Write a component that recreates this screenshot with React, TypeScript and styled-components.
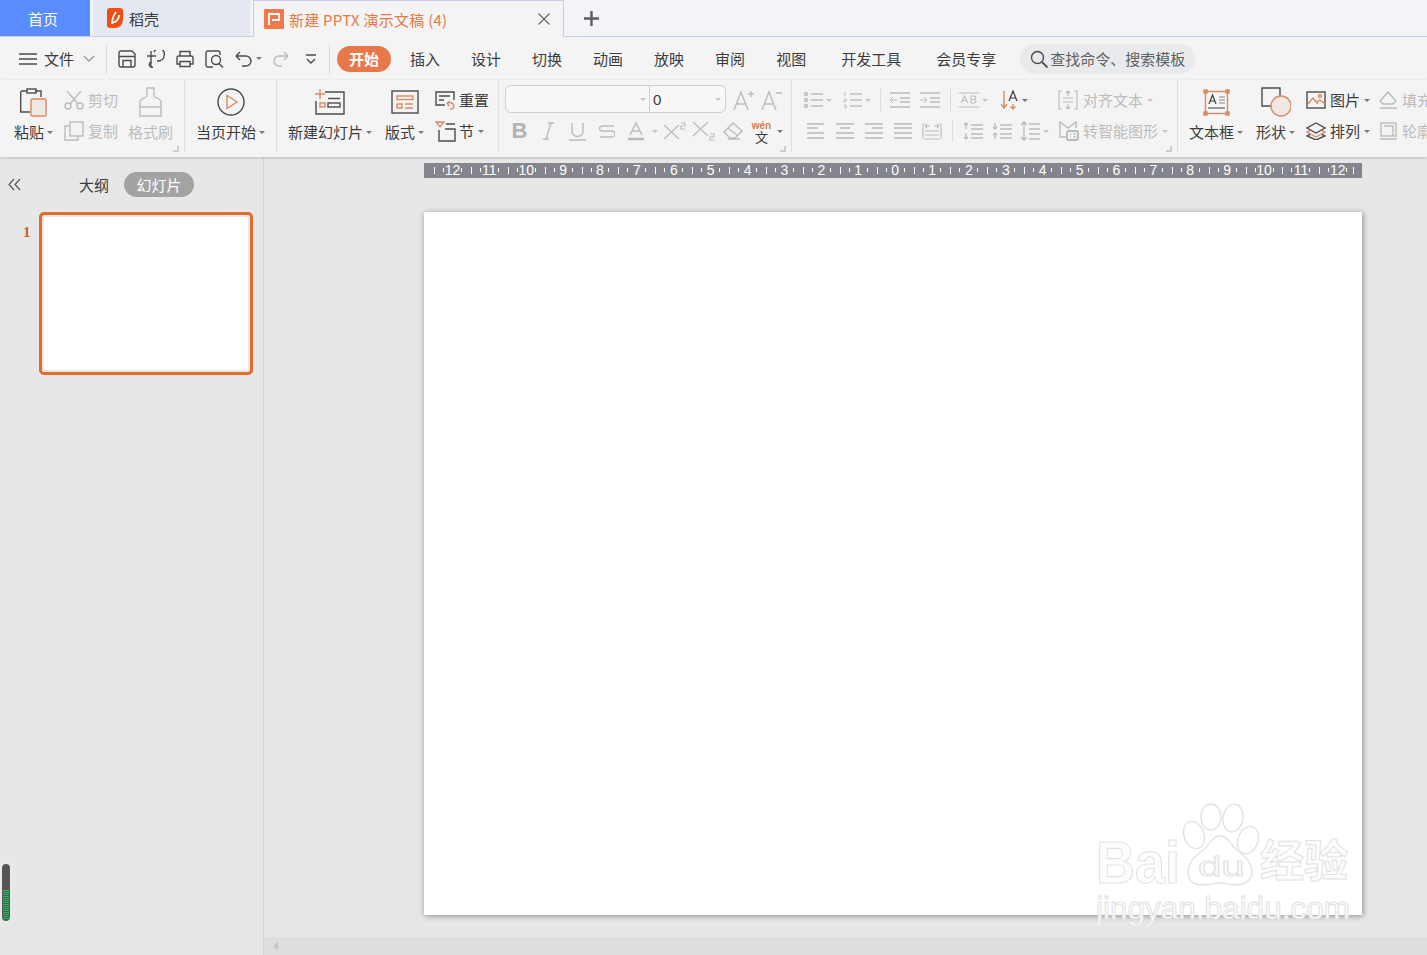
import React from "react";
import styled, { createGlobalStyle } from "styled-components";

const GlobalStyle = createGlobalStyle`
  html, body {
    margin: 0;
    padding: 0;
    background: #e7e7e7;
  }
  * {
    box-sizing: border-box;
  }
`;

const tones = {
  dark: "#4c4c4c",
  gray: "#bcbcbc",
  orange: "#d98b62",
};
type Tone = keyof typeof tones;

const Svg = styled.svg<{ $tone: Tone; $ml?: number }>`
  flex: none;
  display: block;
  fill: none;
  stroke: ${(p) => tones[p.$tone]};
  stroke-width: 1.4;
  margin-left: ${(p) => p.$ml || 0}px;
`;

const Ic = ({
  w,
  h,
  tone = "dark",
  ml,
  children,
}: {
  w: number;
  h: number;
  tone?: Tone;
  ml?: number;
  children: React.ReactNode;
}) => (
  <Svg width={w} height={h} viewBox={`0 0 ${w} ${h}`} $tone={tone} $ml={ml}>
    {children}
  </Svg>
);

const Page = styled.div`
  display: flex;
  flex-direction: column;
  width: 1427px;
  height: 955px;
  overflow: hidden;
  font-family: "Noto Sans CJK SC", "Liberation Sans", sans-serif;
  font-size: 15px;
  color: #3c3c3c;
  background: #e7e7e7;
`;

/* title tabs */
const TabBar = styled.div`
  display: flex;
  flex: none;
  height: 37px;
  background: #f2f4f8;
  border-bottom: 1px solid #c6cfe1;
`;

const HomeTab = styled.div`
  display: flex;
  align-items: center;
  justify-content: center;
  width: 90px;
  padding: 1px 4px 0 0;
  background: #5b8cff;
  color: #fff;
`;

const ShellTab = styled.div`
  display: flex;
  align-items: center;
  gap: 6px;
  width: 157px;
  margin-left: 3px;
  padding-left: 14px;
  background: #e4e8f0;
`;

const DocTab = styled.div`
  display: flex;
  align-items: center;
  gap: 5px;
  width: 311px;
  height: 37px;
  margin-left: 3px;
  padding: 0 13px 0 10px;
  background: #f4f4f4;
  border: 1px solid #c6cfe1;
  border-bottom: none;
  color: #e7784a;
`;

const DocTitle = styled.span`
  flex: 1;
  letter-spacing: 0.25px;
  white-space: nowrap;
`;

const AddTab = styled.div`
  display: flex;
  align-items: center;
  margin-left: 20px;
`;

/* menu row */
const MenuRow = styled.div`
  display: flex;
  align-items: center;
  flex: none;
  height: 43px;
  padding-left: 19px;
  background: #f4f4f4;
`;

const FileMenu = styled.span`
  margin-left: 7px;
`;

const QuickSep = styled.div<{ $ml: number }>`
  flex: none;
  width: 1px;
  height: 30px;
  margin-left: ${(p) => p.$ml}px;
  background: #dcdcdc;
`;

const MenuTab = styled.div<{ $gap: number; $active?: boolean }>`
  flex: none;
  margin-left: ${(p) => p.$gap}px;
  padding: ${(p) => (p.$active ? "0 12px" : "0")};
  line-height: 26px;
  border-radius: 13px;
  background: ${(p) => (p.$active ? "#e7784a" : "transparent")};
  color: ${(p) => (p.$active ? "#fff" : "#3c3c3c")};
  font-weight: ${(p) => (p.$active ? 700 : 400)};
`;

const SearchBox = styled.div`
  display: flex;
  align-items: center;
  gap: 2px;
  width: 175px;
  height: 30px;
  margin-left: 24px;
  padding-left: 10px;
  border-radius: 15px;
  background: #e9eaec;
  color: #5f5f5f;
  white-space: nowrap;
`;

/* ribbon */
const Ribbon = styled.div`
  position: relative;
  z-index: 1;
  display: flex;
  flex: none;
  height: 77px;
  background: #f4f4f4;
  box-shadow: 0 1px 3px rgba(0, 0, 0, 0.18);
`;

const Group = styled.div<{ $w?: number; $pl?: number }>`
  position: relative;
  display: flex;
  flex: ${(p) => (p.$w ? "none" : "1")};
  width: ${(p) => (p.$w ? `${p.$w}px` : "auto")};
  height: 72px;
  padding: 5px 0 0 ${(p) => p.$pl || 0}px;
  border-right: ${(p) => (p.$w ? "1px solid #e0e0e0" : "none")};
  white-space: nowrap;
`;

const Launcher = styled.div`
  position: absolute;
  right: 5px;
  bottom: 0;
  width: 6px;
  height: 6px;
  border-right: 2px solid #cdcdcd;
  border-bottom: 2px solid #cdcdcd;
`;

const LargeButton = styled.div<{ $w: number; $ml?: number; $muted?: boolean }>`
  display: grid;
  grid-template-rows: 34px 26px;
  justify-items: center;
  align-items: center;
  flex: none;
  width: ${(p) => p.$w}px;
  margin-left: ${(p) => p.$ml || 0}px;
  color: ${(p) => (p.$muted ? "#bcbcbc" : "#3c3c3c")};
`;

const LargeLabel = styled.div`
  display: flex;
  align-items: center;
  justify-content: center;
  line-height: 26px;
`;

const Stack = styled.div<{ $ml?: number }>`
  display: flex;
  flex-direction: column;
  gap: 1px;
  flex: none;
  margin-left: ${(p) => p.$ml || 0}px;
`;

const Row = styled.div<{ $ml?: number }>`
  display: flex;
  align-items: center;
  height: 30px;
  margin-left: ${(p) => p.$ml || 0}px;
`;

const Label = styled.span<{ $muted?: boolean; $ml?: number }>`
  margin: 0 0 2px ${(p) => p.$ml ?? 4}px;
  color: ${(p) => (p.$muted ? "#bcbcbc" : "#3c3c3c")};
`;

const Caret = styled.i<{ $ml?: number; $muted?: boolean }>`
  flex: none;
  width: 0;
  height: 0;
  margin-left: ${(p) => p.$ml ?? 3}px;
  border-left: 3px solid transparent;
  border-right: 3px solid transparent;
  border-top: 3px solid ${(p) => (p.$muted ? "#c4c4c4" : "#7a7a7a")};
`;

const RowSep = styled.div<{ $ml: number }>`
  flex: none;
  width: 1px;
  height: 22px;
  margin-left: ${(p) => p.$ml}px;
  background: #dcdcdc;
`;

const FontBox = styled.div`
  display: flex;
  width: 221px;
  height: 28px;
  margin-bottom: 2px;
  border: 1px solid #cfcfcf;
  border-radius: 6px;
  background: #f8f8f8;
`;

const FontName = styled.div`
  display: flex;
  align-items: center;
  justify-content: flex-end;
  width: 144px;
  padding-right: 3px;
  border-right: 1px solid #cfcfcf;
`;

const FontSize = styled.div`
  display: flex;
  align-items: center;
  justify-content: space-between;
  flex: 1;
  padding: 0 4px 0 3px;
  font-family: "Liberation Sans", sans-serif;
  font-size: 15px;
`;

const ToolCell = styled.div<{ $w?: number; $ml?: number }>`
  display: flex;
  align-items: center;
  justify-content: center;
  flex: none;
  width: ${(p) => p.$w || 29}px;
  margin-left: ${(p) => p.$ml || 0}px;
`;

const BoldMark = styled.b`
  font-family: "Liberation Sans", sans-serif;
  font-size: 22px;
  color: #b4b4b4;
`;

const WenMark = styled.div`
  display: flex;
  flex-direction: column;
  align-items: center;
  font-family: "Liberation Sans", sans-serif;
  font-size: 10px;
  font-weight: 700;
  line-height: 11px;
  color: #d07f50;
`;

const WenChar = styled.span`
  font-family: "Noto Sans CJK SC", sans-serif;
  font-size: 13px;
  font-weight: 400;
  line-height: 12px;
  color: #3c3c3c;
`;

/* workspace */
const Workspace = styled.div`
  display: flex;
  flex: 1;
  min-height: 0;
`;

const Sidebar = styled.aside`
  display: flex;
  flex-direction: column;
  flex: none;
  width: 264px;
  padding-top: 15px;
  border-right: 1px solid #d6d6d6;
`;

const SideHeader = styled.div`
  display: flex;
  align-items: center;
  height: 25px;
  padding-left: 8px;
`;

const OutlineTab = styled.span`
  margin-left: 58px;
  color: #3c3c3c;
`;

const SlidesTab = styled.span`
  width: 70px;
  margin-left: 15px;
  line-height: 25px;
  text-align: center;
  border-radius: 13px;
  background: #a3a3a3;
  color: #fff;
`;

const ThumbRow = styled.div`
  display: flex;
  margin-top: 15px;
  padding-left: 23px;
`;

const ThumbNumber = styled.span`
  width: 16px;
  padding-top: 10px;
  font-family: "Liberation Serif", serif;
  font-size: 15px;
  font-weight: 700;
  line-height: 20px;
  color: #d2601a;
`;

const Thumb = styled.div`
  width: 214px;
  height: 163px;
  padding: 2px;
  border: 3px solid #e06c2e;
  border-radius: 5px;
  background: #e7e7e7;
`;

const ThumbPaper = styled.div`
  height: 100%;
  background: #fff;
`;

const LevelMeter = styled.div`
  display: flex;
  flex-direction: column;
  justify-content: flex-end;
  gap: 1px;
  width: 8px;
  height: 57px;
  margin: auto 0 34px 2px;
  padding: 0 1px 2px;
  border-radius: 4px;
  background: #555;
  box-shadow: 0 0 2px #fff;
`;

const LevelTick = styled.div`
  flex: none;
  height: 1px;
  background: #17c653;
`;

const Main = styled.main`
  display: flex;
  flex-direction: column;
  flex: 1;
  min-width: 0;
  padding-top: 6px;
`;

const Ruler = styled.div`
  display: flex;
  flex: none;
  width: 938px;
  height: 15px;
  margin-left: 160px;
  padding-left: 10px;
  background: #85868d;
`;

const RulerCell = styled.div`
  width: 36.9px;
  font-family: "Liberation Sans", sans-serif;
  font-size: 14px;
  line-height: 15px;
  text-align: center;
  color: #fff;
  background-image: linear-gradient(#fff, #fff), linear-gradient(#fff, #fff), linear-gradient(#fff, #fff);
  background-repeat: no-repeat;
  background-size: 1px 7px, 1px 4px, 1px 4px;
  background-position: 0 4px, 25% 5px, 75% 5px;
`;

const RulerEnd = styled.div`
  width: 1px;
  height: 7px;
  margin: 4px 0 0 -3px;
  background: #fff;
`;

const Stage = styled.div`
  flex: 1;
  padding: 34px 0 0 160px;
`;

const Slide = styled.div`
  position: relative;
  width: 938px;
  height: 703px;
  background: #fff;
  box-shadow: 1px 1px 6px rgba(0, 0, 0, 0.4);
`;

const Watermark = styled.div`
  position: absolute;
  top: 591px;
  right: 10px;
  width: 256px;
  height: 125px;
  color: #fdfdfd;
  -webkit-text-stroke: 1px #e2e2e2;
  font-family: "Liberation Sans", sans-serif;
  font-weight: 700;
  line-height: 1;
`;

const WmPaw = styled.svg`
  position: absolute;
  top: 0;
  left: 84px;
  fill: #fff;
  stroke: #e2e2e2;
  stroke-width: 1.4;
`;

const WmBai = styled.span`
  position: absolute;
  top: 29px;
  left: 0;
  font-size: 54px;
  transform: scaleY(1.1);
  transform-origin: top left;
`;

const WmDu = styled.span`
  position: absolute;
  top: 50px;
  left: 102px;
  font-size: 28px;
  font-weight: 400;
  transform: scaleX(1.5);
  transform-origin: top left;
`;

const WmCn = styled.span`
  position: absolute;
  top: 33px;
  left: 164px;
  font-family: "Noto Sans CJK SC", sans-serif;
  font-size: 44px;
`;

const WmUrl = styled.span`
  position: absolute;
  top: 90px;
  left: 0;
  font-size: 31.5px;
  font-weight: 400;
`;

const ScrollBar = styled.div`
  display: flex;
  align-items: center;
  flex: none;
  height: 18px;
  padding-left: 9px;
  background: #dedede;
`;

const ScrollArrow = styled.i`
  width: 0;
  height: 0;
  border-top: 4px solid transparent;
  border-bottom: 4px solid transparent;
  border-right: 5px solid #c4c4c4;
`;

const LinesIcon = ({ tone = "gray" as Tone, rows }: { tone?: Tone; rows: [number, number, number][] }) => (
  <Ic w={18} h={18} tone={tone}>
    {rows.map(([x1, x2, y]) => (
      <path key={y} d={`M${x1} ${y}H${x2}`} strokeWidth="1.6" />
    ))}
  </Ic>
);

const tabs: { label: string; gap: number; active?: boolean }[] = [
  { label: "开始", gap: 7, active: true },
  { label: "插入", gap: 19 },
  { label: "设计", gap: 31 },
  { label: "切换", gap: 31 },
  { label: "动画", gap: 31 },
  { label: "放映", gap: 31 },
  { label: "审阅", gap: 31 },
  { label: "视图", gap: 31 },
  { label: "开发工具", gap: 35 },
  { label: "会员专享", gap: 35 },
];

const rulerLabels = [12, 11, 10, 9, 8, 7, 6, 5, 4, 3, 2, 1, 0, 1, 2, 3, 4, 5, 6, 7, 8, 9, 10, 11, 12];

const App = () => {
  return (
    <Page>
      <GlobalStyle />
      <TabBar>
        <HomeTab>首页</HomeTab>
        <ShellTab>
          <Ic w={16} h={20} tone="orange">
            <path d="M3 0H13A3 3 0 0 1 16 3V12A8 8 0 0 1 8 20H3A3 3 0 0 1 0 17V3A3 3 0 0 1 3 0Z" fill="#f04e12" stroke="none" />
            <path d="M9 4C6 8 5 12 5 16M5 15C9 14 12 11 12 7" stroke="#fff" strokeWidth="1.8" />
          </Ic>
          稻壳
        </ShellTab>
        <DocTab>
          <Ic w={20} h={20} tone="orange">
            <rect width="20" height="20" rx="1" fill="#f07a4d" stroke="none" />
            <path d="M5 16V5H15V11H8" stroke="#fff" strokeWidth="1.8" />
          </Ic>
          <DocTitle>新建 PPTX 演示文稿 (4)</DocTitle>
          <Ic w={12} h={12}>
            <path d="M.5 .5L11.5 11.5M11.5 .5L.5 11.5" stroke="#666" strokeWidth="1.2" />
          </Ic>
        </DocTab>
        <AddTab>
          <Ic w={15} h={15}>
            <path d="M7.5 0V15M0 7.5H15" stroke="#5c5c5c" strokeWidth="2.4" />
          </Ic>
        </AddTab>
      </TabBar>

      <MenuRow>
        <Ic w={18} h={12}>
          <path d="M0 1H18M0 6H18M0 11H18" />
        </Ic>
        <FileMenu>文件</FileMenu>
        <Ic w={12} h={7} tone="gray" ml={9}>
          <path d="M1 1L6 6L11 1" stroke="#9a9a9a" />
        </Ic>
        <QuickSep $ml={11} />
        <Ic w={18} h={18} ml={11}>
          <path d="M3 1H14L17 4V15A2 2 0 0 1 15 17H3A2 2 0 0 1 1 15V3A2 2 0 0 1 3 1ZM1 6.5H17M5 17V10.5H13V17" />
        </Ic>
        <Ic w={18} h={18} ml={11}>
          <path d="M0 6H9M4 1V17M6 17A2.5 2.5 0 0 1 4 12M7 2A5 5 0 0 1 17 6C17 9 14 11 10 11" />
        </Ic>
        <Ic w={18} h={18} ml={11}>
          <path d="M4 6V1.5H14V6M4 14H1V8A2 2 0 0 1 3 6H15A2 2 0 0 1 17 8V14H14M4 11.5H14V16.5H4Z" />
        </Ic>
        <Ic w={19} h={18} ml={11}>
          <path d="M8 17H3A2 2 0 0 1 1 15V3A2 2 0 0 1 3 1H13A2 2 0 0 1 15 3V5" />
          <circle cx="11" cy="10" r="4.5" />
          <path d="M14 13.5L18 17.5" />
        </Ic>
        <Ic w={18} h={16} ml={11}>
          <path d="M1 5H11A5 5 0 0 1 11 15H7M1 5L5 1M1 5L5 9" />
        </Ic>
        <Caret $ml={3} />
        <Ic w={16} h={16} tone="gray" ml={11}>
          <path d="M15 5H6A5 5 0 0 0 6 15H9M15 5L11 1M15 5L11 9" />
        </Ic>
        <Ic w={12} h={10} ml={16}>
          <path d="M1 1H11M2 5L6 9L10 5" />
        </Ic>
        <QuickSep $ml={12} />
        {tabs.map((t) => (
          <MenuTab key={t.label} $gap={t.gap} $active={t.active}>
            {t.label}
          </MenuTab>
        ))}
        <SearchBox>
          <Ic w={18} h={18}>
            <circle cx="7.5" cy="7.5" r="6" />
            <path d="M12 12L17.5 17.5" strokeWidth="1.8" />
          </Ic>
          查找命令、搜索模板
        </SearchBox>
      </MenuRow>

      <Ribbon>
        <Group $w={185} $pl={14}>
          <LargeButton $w={39}>
            <Ic w={27} h={29}>
              <path d="M7 3H2A1.5 1.5 0 0 0 .7 4.5V24H10M15 3H21V9" />
              <rect x="7" y="1" width="9" height="4" />
              <rect x="11" y="11" width="15" height="17" rx="1" fill="#f0e8e2" stroke="#d98b62" />
            </Ic>
            <LargeLabel>
              粘贴
              <Caret />
            </LargeLabel>
          </LargeButton>
          <Stack $ml={11}>
            <Row>
              <Ic w={20} h={20} tone="gray">
                <circle cx="4" cy="16" r="3" />
                <circle cx="16" cy="16" r="3" />
                <path d="M6 14L17 1M14 14L3 1" />
              </Ic>
              <Label $muted>剪切</Label>
            </Row>
            <Row>
              <Ic w={20} h={20} tone="gray">
                <rect x="6" y="1" width="13" height="14" />
                <path d="M6 5H1V19H14V15" />
              </Ic>
              <Label $muted>复制</Label>
            </Row>
          </Stack>
          <LargeButton $w={45} $ml={10} $muted>
            <Ic w={23} h={30} tone="gray">
              <path d="M8 1H15V9C15 11 22 11 22 15V29H1V15C1 11 8 11 8 9ZM1 20H22" />
            </Ic>
            <LargeLabel>格式刷</LargeLabel>
          </LargeButton>
          <Launcher />
        </Group>

        <Group $w={92} $pl={11}>
          <LargeButton $w={69}>
            <Ic w={28} h={28}>
              <circle cx="14" cy="14" r="13" />
              <path d="M10 7.5L20 14L10 20.5Z" stroke="#d98b62" />
            </Ic>
            <LargeLabel>
              当页开始
              <Caret />
            </LargeLabel>
          </LargeButton>
        </Group>

        <Group $w={222} $pl={11}>
          <LargeButton $w={84}>
            <Ic w={30} h={26}>
              <path d="M10 3H29V25H1V12" />
              <path d="M0 5H10M5 0V10" stroke="#d98b62" />
              <rect x="5" y="14" width="5" height="4" stroke="#d98b62" />
              <path d="M13 9.5H25" />
              <rect x="13" y="14" width="12" height="4" />
            </Ic>
            <LargeLabel>
              新建幻灯片
              <Caret />
            </LargeLabel>
          </LargeButton>
          <LargeButton $w={39} $ml={13}>
            <Ic w={28} h={24}>
              <rect x="1" y="1" width="26" height="22" />
              <rect x="6" y="6" width="16" height="3.5" stroke="#d98b62" />
              <rect x="6" y="14" width="5" height="4" stroke="#d98b62" />
              <path d="M14 14H22M14 18H22" stroke="#d98b62" />
            </Ic>
            <LargeLabel>
              版式
              <Caret />
            </LargeLabel>
          </LargeButton>
          <Stack $ml={11}>
            <Row>
              <Ic w={21} h={19}>
                <path d="M10 14H1V1H19V9M4 5H15M4 9H9" />
                <path d="M12 12L14 15M12 12L15 10M12.5 12C15 11 19 12 19 15C19 17 17 18 15 18" stroke="#d98b62" />
              </Ic>
              <Label $ml={3}>重置</Label>
            </Row>
            <Row>
              <Ic w={21} h={21}>
                <path d="M1 1H9L5 6Z" stroke="#d98b62" />
                <path d="M11 3H20M4 9V20H20V8H10" />
              </Ic>
              <Label $ml={3}>节</Label>
              <Caret $ml={4} />
            </Row>
          </Stack>
        </Group>

        <Group $w={293} $pl={6}>
          <Stack>
            <Row>
              <FontBox>
                <FontName>
                  <Caret $muted />
                </FontName>
                <FontSize>
                  0
                  <Caret $muted />
                </FontSize>
              </FontBox>
              <Ic w={21} h={22} tone="gray" ml={7}>
                <path d="M1 21L8 3L15 21M4 15H12M15 5H21M18 2V8" />
              </Ic>
              <Ic w={21} h={22} tone="gray" ml={7}>
                <path d="M1 21L8 3L15 21M4 15H12M15 4H21" />
              </Ic>
            </Row>
            <Row>
              <ToolCell><BoldMark>B</BoldMark></ToolCell>
              <ToolCell>
                <Ic w={11} h={18} tone="gray">
                  <path d="M3 17L8 1M5 1H11M0 17H6" />
                </Ic>
              </ToolCell>
              <ToolCell>
                <Ic w={17} h={19} tone="gray">
                  <path d="M3 1V9A5.5 5.5 0 0 0 14 9V1M0 18H17" />
                </Ic>
              </ToolCell>
              <ToolCell>
                <Ic w={16} h={15} tone="gray">
                  <path d="M15 2H3A2.5 2.5 0 0 0 3 7H13A2.7 2.7 0 0 1 13 13H1" />
                </Ic>
              </ToolCell>
              <ToolCell>
                <Ic w={16} h={19} tone="gray">
                  <path d="M2 13L8 1L14 13M4 9H12" />
                  <path d="M0 17H16" strokeWidth="2.5" />
                </Ic>
              </ToolCell>
              <ToolCell $w={10}><Caret $ml={0} $muted /></ToolCell>
              <ToolCell>
                <Ic w={23} h={18} tone="gray">
                  <path d="M1 3L16 17M16 3L1 17M18 1H22V4H18V7H22" strokeWidth="1.2" />
                </Ic>
              </ToolCell>
              <ToolCell>
                <Ic w={23} h={20} tone="gray">
                  <path d="M1 1L16 15M16 1L1 15M18 13H22V16H18V19H22" strokeWidth="1.2" />
                </Ic>
              </ToolCell>
              <ToolCell>
                <Ic w={20} h={18} tone="gray">
                  <path d="M1 10L10 1L19 9L12 16H7ZM5 6L14 13M5 17H17" />
                </Ic>
              </ToolCell>
              <ToolCell>
                <WenMark>
                  wén
                  <WenChar>文</WenChar>
                </WenMark>
              </ToolCell>
              <Caret $ml={1} />
            </Row>
          </Stack>
          <Launcher />
        </Group>

        <Group $w={386} $pl={11}>
          <Stack>
            <Row>
              <ToolCell $w={22}>
                <Ic w={20} h={18} tone="gray">
                  <circle cx="2" cy="3" r="1.5" />
                  <circle cx="2" cy="9" r="1.5" />
                  <circle cx="2" cy="15" r="1.5" />
                  <path d="M7 3H19M7 9H19M7 15H19" strokeWidth="1.6" />
                </Ic>
              </ToolCell>
              <Caret $muted $ml={1} />
              <ToolCell $w={22} $ml={10}>
                <Ic w={20} h={18} tone="gray">
                  <path d="M2 1V5M1 8H3V10H1V12M1 14H3V17H1" strokeWidth="1" />
                  <path d="M7 3H19M7 9H19M7 15H19" strokeWidth="1.6" />
                </Ic>
              </ToolCell>
              <Caret $muted $ml={1} />
              <RowSep $ml={9} />
              <ToolCell $w={22} $ml={8}>
                <Ic w={22} h={18} tone="gray">
                  <path d="M1 2H21M11 7H21M11 11H21M1 16H21" strokeWidth="1.5" />
                  <path d="M8 9H1M4 6L1 9L4 12" strokeWidth="1" />
                </Ic>
              </ToolCell>
              <ToolCell $w={22} $ml={8}>
                <Ic w={22} h={18} tone="gray">
                  <path d="M1 2H21M11 7H21M11 11H21M1 16H21" strokeWidth="1.5" />
                  <path d="M1 9H8M5 6L8 9L5 12" strokeWidth="1" />
                </Ic>
              </ToolCell>
              <RowSep $ml={9} />
              <ToolCell $w={20} $ml={8}>
                <Ic w={20} h={16} tone="gray">
                  <path d="M0 1H20M0 15H20M2 11L5.5 4L9 11M3.5 8.5H7.5M12 4V11H15.5A1.8 1.8 0 0 0 15.5 7.5H12M12 7.5H15A1.7 1.7 0 0 0 15 4H12" strokeWidth="1.1" />
                </Ic>
              </ToolCell>
              <Caret $muted $ml={3} />
              <ToolCell $w={20} $ml={12}>
                <Ic w={18} h={20} tone="orange">
                  <path d="M3 1V18M0 14L3 18L6 14M12 14V19M9.5 16.5L12 19L14.5 16.5" />
                  <path d="M8 11L12 1L16 11M9.5 8H14.5" stroke="#3c3c3c" strokeWidth="1.2" />
                </Ic>
              </ToolCell>
              <Caret $ml={2} />
              <Ic w={20} h={20} tone="gray" ml={30}>
                <path d="M4 1H1V19H4M16 1H19V19H16M5 8H15M5 12H15M10 1V6M8 3L10 1L12 3M10 14V19M8 17L10 19L12 17" strokeWidth="1.2" />
              </Ic>
              <Label $muted $ml={5}>对齐文本</Label>
              <Caret $muted $ml={4} />
            </Row>
            <Row $ml={4}>
              <LinesIcon rows={[[0, 17, 2], [0, 11, 6], [0, 17, 11], [0, 17, 16]]} />
              <ToolCell $w={18} $ml={11}>
                <LinesIcon rows={[[0, 18, 2], [4, 14, 6], [0, 18, 11], [0, 18, 16]]} />
              </ToolCell>
              <ToolCell $w={18} $ml={11}>
                <LinesIcon rows={[[0, 18, 2], [7, 18, 6], [0, 18, 11], [0, 18, 16]]} />
              </ToolCell>
              <ToolCell $w={18} $ml={11}>
                <LinesIcon rows={[[0, 18, 2], [0, 18, 6], [0, 18, 11], [0, 18, 16]]} />
              </ToolCell>
              <Ic w={20} h={18} tone="gray" ml={10}>
                <path d="M1 1V17M19 1V17M3 9H17M3 13H17M3 17H17M3 4H8M3 4L5 2M3 4L5 6M12 4H17M17 4L15 2M17 4L15 6" strokeWidth="1.1" />
              </Ic>
              <RowSep $ml={10} />
              <Ic w={20} h={18} tone="gray" ml={10}>
                <path d="M8 3H20M8 7H20M8 12H20M8 16H20M3 1V7M1 3L3 1L5 3M3 11V17M1 15L3 17L5 15" strokeWidth="1.3" />
              </Ic>
              <Ic w={20} h={18} tone="gray" ml={9}>
                <path d="M8 3H20M8 7H20M8 12H20M8 16H20M3 1V7M1 5L3 7L5 5M3 11V17M1 13L3 11L5 13" strokeWidth="1.3" />
              </Ic>
              <Ic w={20} h={20} tone="gray" ml={8}>
                <path d="M9 3H20M9 8H20M9 13H20M9 18H20M4 1V19M1 4L4 1L7 4M1 16L4 19L7 16" strokeWidth="1.3" />
              </Ic>
              <Caret $muted $ml={3} />
              <Ic w={20} h={20} tone="gray" ml={10}>
                <path d="M7 16H1V1L9 7L17 1V7" />
                <rect x="8" y="10" width="11" height="9" rx="1.5" stroke="#a8a8a8" />
                <path d="M11 13H12M14 13H17M11 16H12M14 16H17" stroke="#a8a8a8" strokeWidth="1" />
              </Ic>
              <Label $muted $ml={4}>转智能图形</Label>
              <Caret $muted $ml={4} />
            </Row>
          </Stack>
          <Launcher />
        </Group>

        <Group $pl={11}>
          <LargeButton $w={54}>
            <Ic w={27} h={27} tone="orange">
              <rect x="2.5" y="2.5" width="22" height="22" />
              <rect x="1" y="1" width="3" height="3" fill="#d98b62" />
              <rect x="23" y="1" width="3" height="3" fill="#d98b62" />
              <rect x="1" y="23" width="3" height="3" fill="#d98b62" />
              <rect x="23" y="23" width="3" height="3" fill="#d98b62" />
              <path d="M6 15L9.5 6L13 15M7.5 12H11.5M5 19H22" stroke="#3c3c3c" strokeWidth="1.2" />
              <path d="M16 8H22M16 11H22M16 14H22" stroke="#888" strokeWidth="1" />
            </Ic>
            <LargeLabel>
              文本框
              <Caret />
            </LargeLabel>
          </LargeButton>
          <LargeButton $w={39} $ml={13}>
            <Ic w={30} h={30}>
              <path d="M18 19H1V1H19V9" />
              <circle cx="20" cy="19" r="10" fill="#f0e8e2" stroke="#d98b62" />
            </Ic>
            <LargeLabel>
              形状
              <Caret />
            </LargeLabel>
          </LargeButton>
          <Stack $ml={11}>
            <Row>
              <Ic w={20} h={18}>
                <rect x="1" y="1" width="18" height="16" />
                <path d="M1 14L7 7L12 13M11 11L14 9L19 13" stroke="#d98b62" />
                <circle cx="14" cy="5" r="1.5" stroke="#d98b62" />
              </Ic>
              <Label>图片</Label>
              <Caret $ml={4} />
            </Row>
            <Row>
              <Ic w={20} h={18}>
                <path d="M10 1L19 6L10 11L1 6Z" />
                <path d="M4 8.5L1 10L10 15L19 10L16 8.5" stroke="#d98b62" />
                <path d="M4 12.5L1 14L10 18L19 14L16 12.5" />
              </Ic>
              <Label>排列</Label>
              <Caret $ml={4} />
            </Row>
          </Stack>
          <Stack $ml={9}>
            <Row>
              <Ic w={19} h={19} tone="gray">
                <path d="M1 10L9 1L17 10L14 13H4ZM1 17H18" />
              </Ic>
              <Label $muted>填充</Label>
            </Row>
            <Row>
              <Ic w={19} h={19} tone="gray">
                <rect x="2" y="1" width="15" height="13" />
                <path d="M5 4H14V14M1 17H18" />
              </Ic>
              <Label $muted>轮廓</Label>
            </Row>
          </Stack>
        </Group>
      </Ribbon>

      <Workspace>
        <Sidebar>
          <SideHeader>
            <Ic w={13} h={13}>
              <path d="M6 1L1 6.5L6 12M12 1L7 6.5L12 12" stroke="#4e5666" strokeWidth="1.2" />
            </Ic>
            <OutlineTab>大纲</OutlineTab>
            <SlidesTab>幻灯片</SlidesTab>
          </SideHeader>
          <ThumbRow>
            <ThumbNumber>1</ThumbNumber>
            <Thumb>
              <ThumbPaper />
            </Thumb>
          </ThumbRow>
          <LevelMeter>
            {Array.from({ length: 15 }, (_, i) => (
              <LevelTick key={i} />
            ))}
          </LevelMeter>
        </Sidebar>

        <Main>
          <Ruler>
            {rulerLabels.map((n, i) => (
              <RulerCell key={i}>{n}</RulerCell>
            ))}
            <RulerEnd />
          </Ruler>
          <Stage>
            <Slide>
              <Watermark>
                <WmBai>Bai</WmBai>
                <WmPaw width="80" height="90" viewBox="0 0 80 90">
                  <ellipse cx="14" cy="32" rx="10" ry="14" transform="rotate(-20 14 32)" />
                  <ellipse cx="31" cy="14" rx="10" ry="13" />
                  <ellipse cx="53" cy="15" rx="10" ry="14" transform="rotate(10 53 15)" />
                  <ellipse cx="68" cy="37" rx="10" ry="14" transform="rotate(20 68 37)" />
                  <path d="M40 33C48 33 50 42 58 48C66 54 72 60 72 69C72 78 64 82 56 82C48 82 46 80 40 80C34 80 30 82 22 82C14 82 8 78 8 69C8 60 14 54 22 48C30 42 32 33 40 33Z" />
                </WmPaw>
                <WmDu>du</WmDu>
                <WmCn>经验</WmCn>
                <WmUrl>jingyan.baidu.com</WmUrl>
              </Watermark>
            </Slide>
          </Stage>
          <ScrollBar>
            <ScrollArrow />
          </ScrollBar>
        </Main>
      </Workspace>
    </Page>
  );
};

export default App;
